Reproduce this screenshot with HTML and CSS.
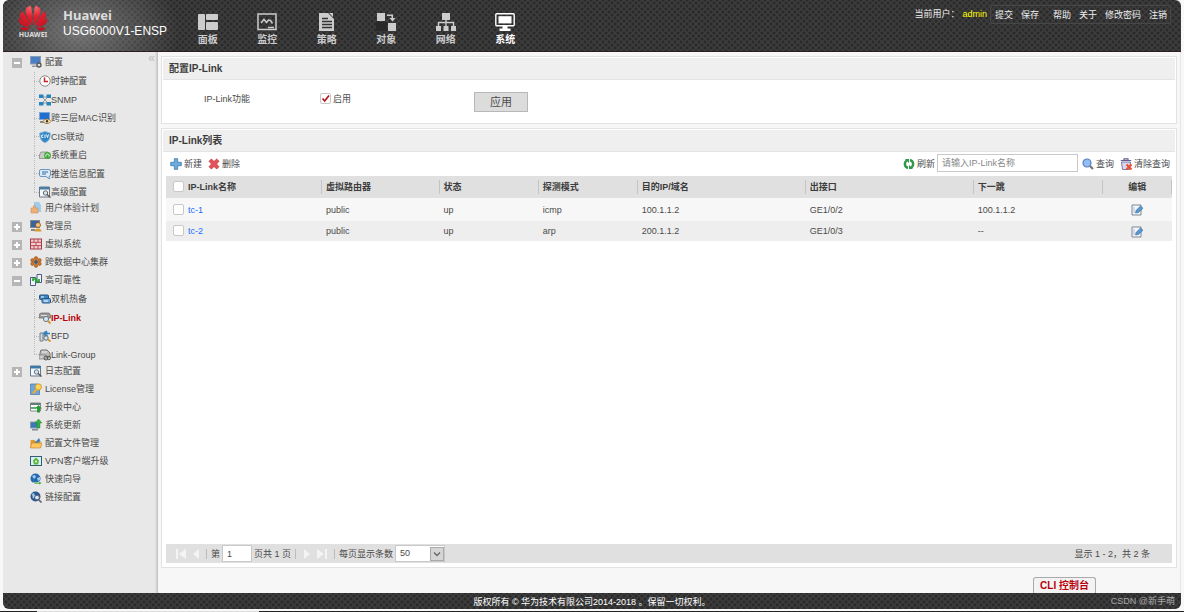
FILE: index.html
```html
<!DOCTYPE html>
<html lang="zh-CN">
<head>
<meta charset="utf-8">
<title>Huawei USG6000V1-ENSP</title>
<link rel="stylesheet" href="styles.css">
</head>
<body>
<header class="top mesh">
  <div class="logo">
    <svg width="32" height="26" viewBox="0 0 32 28" aria-hidden="true">
      <defs>
        <radialGradient id="petal" gradientUnits="userSpaceOnUse" cx="13" cy="3" r="26"><stop offset="0" stop-color="#f0646a"/><stop offset=".35" stop-color="#e3202e"/><stop offset="1" stop-color="#c40a1c"/></radialGradient>
        <g id="half" fill="url(#petal)">
          <path d="M15.200 22C11 15 6 8 8.500 3.500 9.800 1.800 11.700.9 13.500.7 15.600 6 15.600 15 15.200 22z"/>
          <path d="M13.800 22.300C12 18 8 11 4 6.800 1 10 1.500 14 5 17c2.800 2.300 5.800 3.900 8.800 5.300z"/>
          <path d="M12.800 23.300C9 20 4.500 16.300.6 14.200 0 18.200 3 21.800 7 22.600c2 .5 4 .7 5.800.7z"/>
          <path d="M12.600 24.300H2.500c1.200 2.500 3.500 4 6 3.200 1.700-.7 3-2 4.100-3.200z"/>
        </g>
      </defs>
      <use href="#half"/><use href="#half" transform="translate(32 0) scale(-1 1)"/>
    </svg>
    <span class="logo-name">HUAWEI</span>
  </div>
  <div class="product"><strong class="brand">Huawei</strong><span class="model">USG6000V1-ENSP</span></div>
  <nav class="nav">
    <a class="nav-item" href="#"><svg width="20" height="18" viewBox="0 0 20 18" fill="currentColor"><rect width="7" height="16" y="1" rx="1"/><rect x="8" y="1" width="12" height="6" rx="1"/><rect x="8" y="9" width="12" height="8" rx="1"/></svg>面板</a>
    <a class="nav-item" href="#"><svg width="20" height="18" viewBox="0 0 20 18" fill="none" stroke="currentColor" stroke-width="1.500"><rect x="1" y="1" width="18" height="15.500"/><path d="M4 10l3-3.500 2.500 3 2-2.500 2 .5 2 3"/><path d="M11 14.500h6"/></svg>监控</a>
    <a class="nav-item" href="#"><svg width="20" height="18" viewBox="0 0 20 18"><path fill="currentColor" d="M2 0h9l6 6v12H2zM12 0h4v4z"/><path d="M5 5.500h6M5 8.500h10M5 11.500h10M5 14.500h10" stroke="#333" stroke-width="1.300"/></svg>策略</a>
    <a class="nav-item" href="#"><svg width="20" height="18" viewBox="0 0 20 18" fill="currentColor"><path fill="#292929" d="M0 9h11v9H0z"/><rect x="1" y="0" width="8" height="8"/><rect x="12" y="10" width="8" height="8"/><path d="M11 1.500h6V5h2.500L16.500 8.500 13.500 5h2V3H11z"/></svg>对象</a>
    <a class="nav-item" href="#"><svg width="20" height="18" viewBox="0 0 20 18" fill="currentColor"><rect x="6" width="8" height="7"/><rect y="13" width="5" height="5"/><rect x="7.500" y="13" width="5" height="5"/><rect x="15" y="13" width="5" height="5"/><path d="M2.500 13V9.500h15V13M10 7v6" fill="none" stroke="currentColor" stroke-width="1.400"/></svg>网络</a>
    <a class="nav-item active" href="#"><svg width="20" height="18" viewBox="0 0 20 18" fill="currentColor"><rect x=".8" y=".8" width="18.400" height="12" rx="1" fill="none" stroke="currentColor" stroke-width="1.400"/><rect x="3.500" y="3.200" width="13" height="7.200"/><path d="M7.500 13h5v2.500h3V18h-11v-2.500h3z"/></svg>系统</a>
  </nav>
  <div class="account">
    <span>当前用户：</span><span class="user">admin</span>
    <div class="account-links"><a href="#">提交</a><a href="#">保存</a><a class="gap" href="#">帮助</a><a href="#">关于</a><a href="#">修改密码</a><a href="#">注销</a></div>
  </div>
</header>

<div class="body">
  <aside class="side">
    <button class="fold" aria-label="收起">«</button>
    <ul class="tree">
      <li><div class="row"><button class="exp open" aria-label="折叠"></button><svg class="ic" viewBox="0 0 12 12"><rect x=".5" y=".5" width="10" height="7.500" fill="#4a7fc4" stroke="#8a9bb5"/><path d="M2 9.500h5v1.500H2z" fill="#999"/><circle cx="9" cy="9" r="2" fill="#ddd" stroke="#555" stroke-width="1.300"/></svg><a href="#">配置</a></div>
        <ul class="kids">
          <li><svg class="ic" viewBox="0 0 12 12"><circle cx="6" cy="6" r="5.200" fill="#fff" stroke="#888"/><path d="M5.500 2.500V6.500H9" fill="none" stroke="#c22" stroke-width="1.500"/></svg><a href="#">时钟配置</a></li>
          <li><svg class="ic" viewBox="0 0 12 12"><path d="M3 3h6M3 9h6M3 3l6 6M9 3L3 9" stroke="#777" stroke-width=".7"/><path d="M0 .5h4.500V4H0zM7.500.5H12V4H7.500zM0 8h4.500v3.500H0zM7.500 8H12v3.500H7.500z" fill="#2583bd"/></svg><a href="#">SNMP</a></li>
          <li><svg class="ic" viewBox="0 0 12 12"><rect x=".5" y=".5" width="10" height="7" fill="#1f6fd0" stroke="#7aa5dc"/><path d="M1 9h5v2H1z" fill="#888"/><path d="M4 9.300c2-3 6-3 8 0-2 3-6 3-8 0z" fill="#ffe9b5" stroke="#8b6322" stroke-width=".8"/><circle cx="8" cy="9.300" r="1.200" fill="#333"/></svg><a href="#">跨三层MAC识别</a></li>
          <li><svg class="ic" viewBox="0 0 12 12"><path d="M6 .5L11.300 2c0 5-1 8-5.300 9.700C1.700 10 .7 7 .7 2z" fill="#3387c6" stroke="#8bb9dd"/><path d="M4.300 4H2.700v2.500h1.600M6 3.500v3.500M7.500 3.500l1 3 1-3" fill="none" stroke="#fff" stroke-width=".9"/></svg><a href="#">CIS联动</a></li>
          <li><svg class="ic" viewBox="0 0 12 12"><path d="M2 3h7l2 3v3.500H.5V6z" fill="#c8cbc8" stroke="#888" stroke-width=".8"/><circle cx="8.500" cy="6.500" r="3.400" fill="#42aa3b"/><path d="M7 7.500A1.700 1.700 0 1 1 10 7.500" stroke="#fff" fill="none"/></svg><a href="#">系统重启</a></li>
          <li><svg class="ic" viewBox="0 0 12 12"><path d="M2 1.500h8a1.500 1.500 0 0 1 1.500 1.500v4A1.500 1.500 0 0 1 10 8.500l.5 2.500L7 8.500H2A1.500 1.500 0 0 1 .5 7V3A1.500 1.500 0 0 1 2 1.500z" fill="#d9ebfb" stroke="#6c95bf"/><path d="M3 4h6M3 6h4" stroke="#34699d"/></svg><a href="#">推送信息配置</a></li>
          <li><svg class="ic" viewBox="0 0 12 12"><path d="M.5 1h10v10H.5z" fill="#f4f8fb" stroke="#678"/><path d="M.5 1h10v2.500H.5z" fill="#497da6"/><circle cx="6.500" cy="7" r="2.200" fill="#d3e5ef" stroke="#666"/><path d="M8 8.500l3.500 3" stroke="#555" stroke-width="1.500"/></svg><a href="#">高级配置</a></li>
        </ul></li>
      <li><div class="row"><svg class="ic" viewBox="0 0 12 12"><path d="M4 0h5l2 3v7H4z" fill="#9ccdef"/><path d="M1 6h2l1-3c2 0 1 2 1 3h3v5H1z" fill="#edb07a" stroke="#cf8b50" stroke-width=".6"/></svg><a href="#">用户体验计划</a></div></li>
      <li><div class="row"><button class="exp" aria-label="展开"></button><svg class="ic" viewBox="0 0 12 12"><rect x=".5" y=".5" width="9" height="7" fill="#3464a4" stroke="#888"/><path d="M1 9h4v2H1z" fill="#888"/><circle cx="8" cy="5" r="2.500" fill="#f6c178" stroke="#84501c" stroke-width=".8"/><path d="M4.500 11.500c0-4 7-4 7 0z" fill="#d99a34"/></svg><a href="#">管理员</a></div></li>
      <li><div class="row"><button class="exp" aria-label="展开"></button><svg class="ic" viewBox="0 0 12 12"><rect x=".5" y="1" width="11" height="10" fill="#f3cdd0" stroke="#a23a46"/><path d="M.5 4.300h11M.5 7.600h11M4 1v3.300M8 1v3.300M6 4.300v3.300M4 7.600V11M8 7.600V11" stroke="#b4414e" stroke-width=".9"/></svg><a href="#">虚拟系统</a></div></li>
      <li><div class="row"><button class="exp" aria-label="展开"></button><svg class="ic" viewBox="0 0 12 12"><g fill="#d8741c" stroke="#8b4e21" stroke-width=".6"><circle cx="6" cy="2.300" r="1.700"/><circle cx="6" cy="9.700" r="1.700"/><circle cx="2.500" cy="4.200" r="1.700"/><circle cx="9.500" cy="4.200" r="1.700"/><circle cx="2.500" cy="7.800" r="1.700"/><circle cx="9.500" cy="7.800" r="1.700"/></g><circle cx="6" cy="6" r="2" fill="#4c545c"/></svg><a href="#">跨数据中心集群</a></div></li>
      <li><div class="row"><button class="exp open" aria-label="折叠"></button><svg class="ic" viewBox="0 0 12 12"><path d="M.5 3.500h5v8h-5zM7 .5h4.500v8H7z" fill="#f1f3fa" stroke="#4c5a82"/><path d="M3 7V5h3M9 5v2.500H6" stroke="#22a332" stroke-width="1.700" fill="none"/><path d="M5 3l2.500 2L5 7zM7 5.500L4.500 7.500 7 9.500z" fill="#22a332"/></svg><a href="#">高可靠性</a></div>
        <ul class="kids">
          <li><svg class="ic" viewBox="0 0 12 12"><rect x=".5" y="2" width="9" height="4.500" rx="1" fill="#3c82c2" stroke="#235481"/><rect x="3" y="5.500" width="8.500" height="4.500" rx="1" fill="#69a7dc" stroke="#235481"/><path d="M5 8h4M2 4h3" stroke="#fff"/></svg><a href="#">双机热备</a></li>
          <li class="current"><svg class="ic" viewBox="0 0 12 12"><path d="M0 2.500L2 1h8l1.500 2v3H0z" fill="#999" stroke="#666" stroke-width=".7"/><path d="M2 3.500h6" stroke="#ddd"/><circle cx="7" cy="7" r="2.600" fill="#cde7f7" stroke="#777"/><path d="M9 9l2.500 2.500" stroke="#d29324" stroke-width="1.800"/></svg><a href="#">IP-Link</a></li>
          <li><svg class="ic" viewBox="0 0 12 12"><path d="M1 3h3v8H1zM5 2h3v4H5z" fill="#ccd7df" stroke="#5b6d79" stroke-width=".8"/><path d="M11 3.500H6M8 1L5 3.500 8 6" fill="none" stroke="#2482c5" stroke-width="1.300"/><circle cx="7" cy="8" r="2.200" fill="#cde7f7" stroke="#666"/><path d="M9 9.500l2.500 2" stroke="#d29324" stroke-width="1.700"/></svg><a href="#">BFD</a></li>
          <li><svg class="ic" viewBox="0 0 12 12"><path d="M2 1h6l3 3v4H1V4z" fill="#bbb" stroke="#777"/><path d="M3 3h5" stroke="#eee"/><path d="M0 6h7v4H0z" fill="#ccc" stroke="#777" stroke-width=".7"/><circle cx="7" cy="9" r="2" fill="none" stroke="#555"/><circle cx="9.800" cy="9" r="1.700" fill="none" stroke="#555"/></svg><a href="#">Link-Group</a></li>
        </ul></li>
      <li><div class="row"><button class="exp" aria-label="展开"></button><svg class="ic" viewBox="0 0 12 12"><path d="M.5 1h10v10H.5z" fill="#f4f8fb" stroke="#678"/><path d="M.5 1h10v2.500H.5z" fill="#3b78aa"/><circle cx="6.500" cy="7" r="2.200" fill="#d3e5ef" stroke="#678"/><path d="M8 8.500l3.500 3" stroke="#555" stroke-width="1.500"/></svg><a href="#">日志配置</a></div></li>
      <li><div class="row"><svg class="ic" viewBox="0 0 12 12"><path d="M.5 1h7l2 2v8.500h-9z" fill="#6fa5dc" stroke="#45719d" stroke-width=".7"/><circle cx="8.300" cy="4" r="3.200" fill="#ffd35a" stroke="#bf8a1e" stroke-width=".7"/><path d="M7 6l-4 4.500" stroke="#e4ae35" stroke-width="2.200"/></svg><a href="#">License管理</a></div></li>
      <li><div class="row"><svg class="ic" viewBox="0 0 12 12"><path d="M.5 2h10v8H.5z" fill="#fff" stroke="#888"/><path d="M.5 2h10v2H.5z" fill="#667d75"/><path d="M1 7h5" stroke="#299044" stroke-width="1.500"/><path d="M8.500 4L12 7.500h-2V11.500H7V7.500H5z" fill="#219c38"/></svg><a href="#">升级中心</a></div></li>
      <li><div class="row"><svg class="ic" viewBox="0 0 12 12"><path d="M.5 3h8.500v6H.5z" fill="#397bb7" stroke="#8498a9"/><path d="M2 10h6v1.500H2z" fill="#889"/><path d="M8.500 0L12 4h-2v5H7V4H5z" fill="#37ad43" stroke="#257b2e" stroke-width=".4"/></svg><a href="#">系统更新</a></div></li>
      <li><div class="row"><svg class="ic" viewBox="0 0 12 12"><path d="M.5 3h4l1 1h5v7H.5z" fill="#e79c2a"/><path d="M1 1.500l4 4 4-4.500 1.500 3L6 7z" fill="#3e86c3"/><path d="M.5 11l1-5H12l-1.500 5z" fill="#ffc761" stroke="#bd7e1c" stroke-width=".6"/></svg><a href="#">配置文件管理</a></div></li>
      <li><div class="row"><svg class="ic" viewBox="0 0 12 12"><rect x=".5" y="1.500" width="11" height="9" fill="#d7f0f7" stroke="#345e72"/><path d="M6 2.500l3 3-1 4H4l-1-4z" fill="#5bb733"/><circle cx="6" cy="6.500" r="1" fill="#fff"/></svg><a href="#">VPN客户端升级</a></div></li>
      <li><div class="row"><svg class="ic" viewBox="0 0 12 12"><circle cx="5.500" cy="5.500" r="5" fill="#2869ad"/><path d="M2 3l3-1 1 2-2 2zM7 5l3-1v3L8 8z" fill="#9dcdf0"/><path d="M3 9.500h6V8l3 2.300L9 12v-1H5z" fill="#4bad42" stroke="#fff" stroke-width=".4"/></svg><a href="#">快速向导</a></div></li>
      <li><div class="row"><svg class="ic" viewBox="0 0 12 12"><circle cx="5.500" cy="5.500" r="5" fill="#2c598d"/><path d="M2 3l2-1 1 3-2 3z" fill="#9dcdf0"/><circle cx="7" cy="6.500" r="2.300" fill="#dcecf6" stroke="#667"/><path d="M8.500 8.500l3 3" stroke="#667" stroke-width="1.700"/></svg><a href="#">链接配置</a></div></li>
    </ul>
  </aside>

  <main class="main">
    <section class="panel">
      <h2 class="title">配置IP-Link</h2>
      <form class="config">
        <span class="config-label">IP-Link功能</span>
        <label class="config-check"><input type="checkbox" class="check" checked>启用</label>
        <button type="button" class="apply">应用</button>
      </form>
    </section>

    <section class="panel list">
      <h2 class="title">IP-Link列表</h2>
      <div class="tools">
        <button class="tool"><svg class="ic" viewBox="0 0 12 12"><path d="M4.300.7h3.400v3.600h3.600v3.400H7.700v3.600H4.300V7.700H.7V4.300h3.600z" fill="#6cabdc" stroke="#3c78ac" stroke-width=".8"/></svg>新建</button>
        <button class="tool"><svg class="ic" viewBox="0 0 12 12"><path d="M3.300 1L6 3.500 8.700 1 11 3.300 8.500 6 11 8.700 8.700 11 6 8.500 3.300 11 1 8.700 3.500 6 1 3.300z" fill="#e4525a" stroke="#b92d37" stroke-width=".7"/></svg>删除</button>
        <button class="tool refresh"><svg class="ic" viewBox="0 0 12 12"><path d="M5 10C1 9 1 4 4 2.500M7 2c4 1 4 6 1 7.500" fill="none" stroke="#31984a" stroke-width="2.400"/><path d="M2 1h4v4zM10 11H6V7z" fill="#31984a"/></svg>刷新</button>
        <input class="query" type="text" placeholder="请输入IP-Link名称" aria-label="IP-Link名称">
        <button class="tool"><svg class="ic" viewBox="0 0 12 12"><path d="M7.500 7.500l3.500 3.500" stroke="#777" stroke-width="2.200"/><circle cx="5" cy="5" r="4" fill="#8ebdf8" stroke="#5c7fbd" stroke-width="1.200"/></svg>查询</button>
        <button class="tool"><svg class="ic" viewBox="0 0 12 12"><path d="M4 2V.8h4V2M.8 2.500h10.400" fill="none" stroke="#625f91" stroke-width="1.200"/><path d="M1.500 4h9l-1 7.500h-7z" fill="#d9d8f0" stroke="#625f91" stroke-width=".8"/><path d="M6.500 6.500l5 5M11.500 6.500l-5 5" stroke="#ed4e2c" stroke-width="2"/></svg>清除查询</button>
      </div>
      <table class="grid">
        <colgroup><col class="c-name"><col class="c-vr"><col class="c-state"><col class="c-state"><col class="c-wide"><col class="c-wide"><col class="c-hop"><col class="c-edit"></colgroup>
        <thead><tr><th><label class="cell"><input type="checkbox" class="check">IP-Link名称</label></th><th>虚拟路由器</th><th>状态</th><th>探测模式</th><th>目的IP/域名</th><th>出接口</th><th>下一跳</th><th class="edit">编辑</th></tr></thead>
        <tbody>
          <tr><td><div class="cell"><input type="checkbox" class="check" aria-label="tc-1"><a href="#">tc-1</a></div></td><td>public</td><td>up</td><td>icmp</td><td>100.1.1.2</td><td>GE1/0/2</td><td>100.1.1.2</td><td class="edit"><button class="pen" aria-label="编辑 tc-1"><svg class="ic" viewBox="0 0 12 12"><path d="M1 1h9v10H1z" fill="#f4f6fa" stroke="#7a8797"/><path d="M3 3v6" stroke="#bbc"/><path d="M4.500 9l.7-2.700L9.500 2 12 4.300 7.500 8.500z" fill="#5999d3" stroke="#366896" stroke-width=".6"/></svg></button></td></tr>
          <tr><td><div class="cell"><input type="checkbox" class="check" aria-label="tc-2"><a href="#">tc-2</a></div></td><td>public</td><td>up</td><td>arp</td><td>200.1.1.2</td><td>GE1/0/3</td><td>--</td><td class="edit"><button class="pen" aria-label="编辑 tc-2"><svg class="ic" viewBox="0 0 12 12"><path d="M1 1h9v10H1z" fill="#f4f6fa" stroke="#7a8797"/><path d="M3 3v6" stroke="#bbc"/><path d="M4.500 9l.7-2.700L9.500 2 12 4.300 7.500 8.500z" fill="#5999d3" stroke="#366896" stroke-width=".6"/></svg></button></td></tr>
        </tbody>
      </table>
      <div class="pager">
        <button class="page-btn" aria-label="首页"><svg width="10" height="10" viewBox="0 0 10 10"><path d="M0 0h2v10H0zM10 0v10L3 5z"/></svg></button>
        <button class="page-btn" aria-label="上一页"><svg width="6" height="10" viewBox="0 0 6 10"><path d="M6 0v10L0 5z"/></svg></button>
        <i class="sep"></i>
        <label class="page-no">第<input class="page-input" type="text" value="1"></label><span>页共 1 页</span>
        <i class="sep"></i>
        <button class="page-btn" aria-label="下一页"><svg width="6" height="10" viewBox="0 0 6 10"><path d="M0 0v10l6-5z"/></svg></button>
        <button class="page-btn" aria-label="末页"><svg width="10" height="10" viewBox="0 0 10 10"><path d="M0 0v10l7-5zM8 0h2v10H8z"/></svg></button>
        <i class="sep"></i>
        <label class="page-no">每页显示条数<select class="page-size"><option>50</option></select></label>
        <span class="total">显示 1 - 2，共 2 条</span>
      </div>
    </section>
    <div class="dock"><button class="cli">CLI 控制台</button></div>
  </main>
</div>
<footer class="foot mesh"><span>版权所有 © 华为技术有限公司2014-2018 。保留一切权利。</span><span class="mark">CSDN @新手萌</span></footer>
<div class="edge"></div>
</body>
</html>
```

FILE: styles.css
```css
* { box-sizing: border-box; }

body {
  margin: 0;
  min-height: 100vh;
  display: flex;
  flex-direction: column;
  background: #f8f8f8;
  color: #4a4a4a;
  font: 9px/18px "Liberation Sans", "Noto Sans CJK SC", sans-serif;
}

a { color: inherit; text-decoration: none; }
ul { list-style: none; margin: 0; padding: 0; }
button, input, select { font: inherit; color: inherit; margin: 0; padding: 0; }
button { border: 0; background: none; }
svg { display: block; flex: none; }
.ic { width: 12px; height: 12px; }

.mesh {
  background-color: #3d3d3e;
  background-image:
    radial-gradient(circle, #2a2a2a 1px, transparent 2px),
    radial-gradient(circle, #2a2a2a 1px, transparent 2px);
  background-size: 6px 6px;
  background-position: 0 0, 3px 3px;
}

/* header */
.top {
  position: relative;
  display: flex;
  height: 52px;
  margin: 0 3px;
  border-radius: 6px 6px 0 0;
  border-bottom: 1px solid #2a2021;
  color: #ddd;
}
.top::before {
  content: "";
  position: absolute;
  inset: 0 auto 0 0;
  width: 200px;
  border-radius: 6px 0 0 0;
  background: radial-gradient(100px 70px at 38% 60%, rgba(180, 180, 180, .5), transparent);
}
.top > * { position: relative; }
.logo {
  width: 60px;
  padding-top: 5px;
  display: flex;
  flex-direction: column;
  align-items: center;
}
.logo-name { font: bold 7px/8px "Noto Sans", sans-serif; }
.product { width: 115px; padding-top: 8px; }
.product > * { display: block; white-space: nowrap; }
.brand { font: bold 13px/15px "Noto Sans", sans-serif; color: #ddd; }
.model { font-size: 12px; line-height: 16px; color: #fff; }
.nav {
  display: grid;
  grid-template-columns: repeat(6, 1fr);
  width: 357px;
  padding-top: 13px;
}
.nav-item {
  display: flex;
  flex-direction: column;
  align-items: center;
  color: #ccc;
  font-size: 10px;
  font-weight: bold;
}
.nav-item.active { color: #fff; }
.account {
  display: flex;
  gap: 3px;
  margin: 5px 10px 0 auto;
  height: 19px;
  color: #eee;
  white-space: nowrap;
}
.user { color: #ff0; }
.account-links {
  display: flex;
  gap: 8px;
  padding: 0 3px 0 4px;
  border: 1px solid #474747;
  border-radius: 2px;
  line-height: 18px;
}
.gap { margin-left: 6px; }

.body { flex: 1; display: flex; margin: 0 3px; border-right: 1px solid #e6e6e6; }

/* sidebar */
.side {
  position: relative;
  width: 155px;
  padding-top: 1px;
  background: linear-gradient(to left, #bdbdbd, #e8e8e8 3px);
}
.fold {
  position: absolute;
  top: 0;
  right: 3px;
  color: #bbb;
  font-size: 12px;
  line-height: 12px;
}
.row {
  display: flex;
  align-items: center;
  gap: 3px;
  height: 18px;
  padding-left: 27px;
  position: relative;
}
.exp {
  position: absolute;
  left: 9px;
  top: 5px;
  width: 10px;
  height: 10px;
  border: 1px solid #b5b5b5;
  background:
    linear-gradient(#fff, #fff) center / 6px 2px no-repeat,
    linear-gradient(#fff, #fff) center / 2px 6px no-repeat,
    #b6b6b6;
}
.exp.open { background: linear-gradient(#fff, #fff) center / 6px 2px no-repeat, #b6b6b6; }
.kids {
  margin: 0 0 -2px 31px;
  padding-top: 1px;
}
.kids li {
  display: flex;
  align-items: center;
  height: 18px;
  background:
    repeating-linear-gradient(#bbb 0 1px, transparent 1px 2px) left / 1px 100% no-repeat,
    repeating-linear-gradient(to right, #bbb 0 1px, transparent 1px 2px) left center / 5px 1px no-repeat;
  padding-left: 5px;
}
.kids li:nth-child(even) { height: 19px; }
.kids li:last-child { background-size: 1px 50%, 5px 1px; background-position: left top, left center; }
.current { color: #b8000b; font-weight: bold; }

/* content */
.main {
  flex: 1;
  min-width: 0;
  display: flex;
  flex-direction: column;
  padding: 4px 3px 0 3px;
  background: #f7f7f7;
}
.panel {
  padding: 1px;
  margin-bottom: 4px;
  border: 1px solid #e3e3e3;
  background: #fff;
}
.title {
  margin: 0;
  padding-left: 6px;
  font-size: 10px;
  line-height: 21px;
  color: #3c3c3c;
  background: #efefef;
  border-bottom: 1px solid #e4e4e4;
}
.config {
  display: grid;
  grid-template-columns: 116px 154px 54px;
  align-items: start;
  height: 42px;
  padding: 10px 0 0 41px;
}
.config-check { display: flex; align-items: center; gap: 2px; }
.config-check .check { margin-bottom: 2px; }
.check {
  appearance: none;
  flex: none;
  width: 11px;
  height: 11px;
  border: 1px solid #c8c8c8;
  border-radius: 2px;
  background: #fff;
}
.check:checked {
  background: #fff url("data:image/svg+xml,%3Csvg xmlns='http://www.w3.org/2000/svg' viewBox='0 0 9 9'%3E%3Cpath d='M1.500 4.500l2.200 2.500L8 1.500' fill='none' stroke='%23b5121b' stroke-width='1.700'/%3E%3C/svg%3E");
}
.apply {
  height: 20px;
  margin-top: 2px;
  border: 1px solid #b8b8b8;
  background: #dcdcdc;
  font-size: 11px;
}

.list { flex: 1; display: flex; flex-direction: column; margin: 0; padding-bottom: 4px; }
.tools {
  display: flex;
  align-items: center;
  height: 24px;
  padding: 0 5px 0 7px;
  gap: 6px;
}
.tool { display: flex; align-items: center; gap: 2px; white-space: nowrap; }
.refresh { margin-left: auto; }
.query {
  width: 141px;
  height: 18px;
  margin: 0 -2px 3px -4px;
  padding: 0 4px;
  border: 1px solid #c9c9c9;
  background: #fff;
}
.query::placeholder { color: #888; }

.grid {
  table-layout: fixed;
  border-collapse: collapse;
  margin: 0 3px;
}
.c-name { width: 15.500%; }
.c-vr { width: 11.700%; }
.c-state { width: 9.850%; }
.c-wide { width: 16.700%; }
.c-hop { width: 12.800%; }
.c-edit { width: 6.900%; }
.grid th, .grid td { padding: 0 0 0 4px; text-align: left; }
.grid th:first-child, .grid td:first-child { padding-left: 7px; }
.grid th {
  height: 22px;
  color: #3c3c3c;
  background: linear-gradient(#c4c4c4, #c4c4c4) right center / 1px 14px no-repeat, #e0e0e0;
}
.grid tbody tr { height: 23px; background: #f7f7f7; }
.grid tbody tr:nth-child(even) { height: 20px; background: #eee; }
.cell { display: flex; align-items: center; gap: 4px; }
.cell .check { margin-bottom: 1px; }
.cell a { color: #1a6eff; }
.grid .edit { padding: 0; text-align: center; }
.pen { display: inline-block; vertical-align: middle; }

.pager {
  display: flex;
  align-items: center;
  gap: 7px;
  height: 19px;
  margin: auto 3px 0;
  padding: 0 22px 0 10px;
  background: #e0e0e0;
}
.page-btn { fill: #f4f4f4; }
.sep { width: 1px; height: 10px; margin-right: -3px; background: #bbb; }
.page-no { display: flex; gap: 2px; align-items: center; margin-right: -5px; }
span + .sep { margin-left: -3px; margin-right: 1px; }
.page-input { width: 30px; height: 17px; padding: 0 4px; border: 1px solid #c9c9c9; background: #fff; }
.page-size {
  appearance: none;
  width: 50px;
  height: 17px;
  padding-left: 4px;
  line-height: 15px;
  border: 1px solid #c9c9c9;
  border-radius: 0;
  background: #fff url("data:image/svg+xml,%3Csvg xmlns='http://www.w3.org/2000/svg' viewBox='0 0 14 14'%3E%3Crect x='.5' y='.5' width='13' height='13' fill='%23d5d5d5' stroke='%23aaa'/%3E%3Cpath d='M4 5.500l3 3 3-3' fill='none' stroke='%23666' stroke-width='1.300'/%3E%3C/svg%3E") right center / 14px 14px no-repeat;
}
.total { margin-left: auto; }

.dock {
  display: flex;
  align-items: flex-end;
  justify-content: flex-end;
  height: 25px;
  padding-right: 81px;
}
.cli {
  width: 63px;
  height: 16px;
  border: 1px solid #aaa;
  border-bottom: 0;
  border-radius: 3px 3px 0 0;
  background: #f3f3f3;
  color: #b8000b;
  font-size: 10px;
  font-weight: bold;
  line-height: 15px;
  white-space: nowrap;
}

.foot {
  position: relative;
  height: 16px;
  margin: 0 3px;
  border-radius: 0 0 6px 6px;
  color: #fff;
  line-height: 18px;
  text-align: center;
}
.mark { position: absolute; right: 6px; top: 0; color: #aaa; line-height: 16px; }
.edge {
  height: 1px;
  margin-top: 2px;
  background: linear-gradient(to right, #222 37px, #ddd 37px 259px, #222 259px);
}
```
